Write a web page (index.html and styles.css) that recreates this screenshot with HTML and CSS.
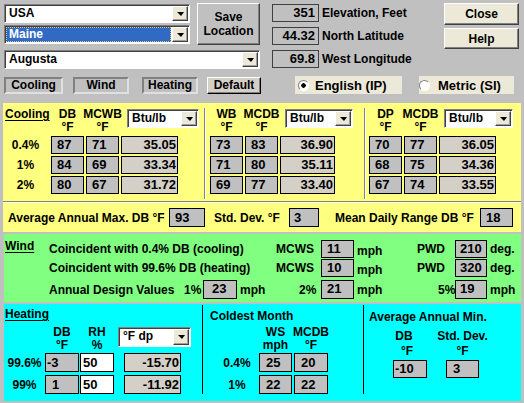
FILE: index.html
```html
<!DOCTYPE html>
<html lang="en">
<head>
    <meta charset="UTF-8" />
    <title>Design Conditions</title>
    <link rel="stylesheet" href="styles.css">
</head>
<body>
<div class="form">
    <div class="top">
        <div class="loc">
            <div class="loc-row">
                <div class="pick-stack">
                    <div class="combo"><span class="combo-text">USA</span><span class="drop"></span></div>
                    <div class="combo"><span class="combo-text combo-sel">Maine</span><span class="drop"></span></div>
                </div>
                <div class="btn btn-save">Save<br>Location</div>
            </div>
            <div class="combo combo-city"><span class="combo-text">Augusta</span><span class="drop"></span></div>
            <div class="tabs">
                <span class="tab tab-down">Cooling</span>
                <span class="tab tab-down tab-wind">Wind</span>
                <span class="tab tab-down tab-heat">Heating</span>
                <span class="tab tab-default">Default</span>
            </div>
        </div>
        <div class="site">
            <div class="site-row">
                <div class="facts">
                    <div class="fact"><span class="fact-val">351</span>Elevation, Feet</div>
                    <div class="fact"><span class="fact-val">44.32</span>North Latitude</div>
                    <div class="fact"><span class="fact-val">69.8</span>West Longitude</div>
                </div>
                <div class="cmds">
                    <div class="btn btn-cmd">Close</div>
                    <div class="btn btn-cmd btn-help">Help</div>
                </div>
            </div>
            <div class="units">
                <span class="radio radio-on"><span class="dot"></span>English (IP)</span>
                <span class="radio radio-si"><span class="dot"></span>Metric (SI)</span>
            </div>
        </div>
    </div>

    <!-- cooling -->
    <section class="panel cooling">
        <div class="cool-groups">
            <div class="grp grp-1">
                <div class="grp-head">
                    <span class="lead"><span class="title">Cooling</span></span>
                    <span class="col-head">DB<br>°F</span>
                    <span class="col-head">MCWB<br>°F</span>
                    <div class="combo combo-unit"><span class="combo-text">Btu/lb</span><span class="drop"></span></div>
                </div>
                <div class="grp-row"><span class="lead">0.4%</span><span class="box">87</span><span class="box">71</span><span class="box box-enth">35.05</span></div>
                <div class="grp-row"><span class="lead">1%</span><span class="box">84</span><span class="box">69</span><span class="box box-enth">33.34</span></div>
                <div class="grp-row"><span class="lead">2%</span><span class="box">80</span><span class="box">67</span><span class="box box-enth">31.72</span></div>
            </div>
            <div class="grp grp-2">
                <div class="grp-head">
                    <span class="lead"></span>
                    <span class="col-head">WB<br>°F</span>
                    <span class="col-head">MCDB<br>°F</span>
                    <div class="combo combo-unit"><span class="combo-text">Btu/lb</span><span class="drop"></span></div>
                </div>
                <div class="grp-row"><span class="lead"></span><span class="box">73</span><span class="box">83</span><span class="box box-enth">36.90</span></div>
                <div class="grp-row"><span class="lead"></span><span class="box">71</span><span class="box">80</span><span class="box box-enth">35.11</span></div>
                <div class="grp-row"><span class="lead"></span><span class="box">69</span><span class="box">77</span><span class="box box-enth">33.40</span></div>
            </div>
            <div class="grp grp-3">
                <div class="grp-head">
                    <span class="lead"></span>
                    <span class="col-head">DP<br>°F</span>
                    <span class="col-head">MCDB<br>°F</span>
                    <div class="combo combo-unit"><span class="combo-text">Btu/lb</span><span class="drop"></span></div>
                </div>
                <div class="grp-row"><span class="lead"></span><span class="box">70</span><span class="box">77</span><span class="box box-enth">36.05</span></div>
                <div class="grp-row"><span class="lead"></span><span class="box">68</span><span class="box">75</span><span class="box box-enth">34.36</span></div>
                <div class="grp-row"><span class="lead"></span><span class="box">67</span><span class="box">74</span><span class="box box-enth">33.55</span></div>
            </div>
        </div>
        <div class="cool-rule"></div>
        <div class="cool-foot">
            <span class="foot-lbl foot-max">Average Annual Max. DB °F</span>
            <span class="box box-max">93</span>
            <span class="foot-lbl foot-sd">Std. Dev. °F</span>
            <span class="box box-sd">3</span>
            <span class="foot-lbl foot-range">Mean Daily Range DB °F</span>
            <span class="box box-range">18</span>
        </div>
    </section>

    <!-- wind -->
    <section class="panel wind">
        <div class="wind-side"><span class="title">Wind</span></div>
        <div class="wind-body">
            <div class="wind-row">
                <span class="w-desc">Coincident with 0.4% DB (cooling)</span>
                <span class="w-key">MCWS</span>
                <span class="box box-w">11</span>
                <span class="w-unit w-low w-gap">mph</span>
                <span class="w-key w-key-pwd">PWD</span>
                <span class="box box-pwd">210</span>
                <span class="w-unit">deg.</span>
            </div>
            <div class="wind-row">
                <span class="w-desc">Coincident with 99.6% DB (heating)</span>
                <span class="w-key">MCWS</span>
                <span class="box box-w">10</span>
                <span class="w-unit w-low w-gap">mph</span>
                <span class="w-key w-key-pwd">PWD</span>
                <span class="box box-pwd">320</span>
                <span class="w-unit">deg.</span>
            </div>
            <div class="wind-row wind-annual">
                <span class="w-annual">Annual Design Values</span>
                <span class="w-pct w-pct-1">1%</span>
                <span class="box box-w box-w1">23</span>
                <span class="w-unit w-gap-1">mph</span>
                <span class="w-pct w-pct-2">2%</span>
                <span class="box box-w">21</span>
                <span class="w-unit w-gap-2">mph</span>
                <span class="w-pct w-pct-5">5%</span>
                <span class="box box-pwd">19</span>
                <span class="w-unit">mph</span>
            </div>
        </div>
    </section>

    <!-- heating -->
    <section class="panel heating">
        <div class="hgrp hgrp-heat">
            <span class="title">Heating</span>
            <div class="heat-head">
                <span class="heat-lead"></span>
                <span class="heat-col">DB<br>°F</span>
                <span class="heat-col">RH<br>%</span>
                <div class="combo combo-dp"><span class="combo-text">°F dp</span><span class="drop"></span></div>
            </div>
            <div class="heat-row"><span class="heat-lead">99.6%</span><span class="box box-h">-3</span><span class="box box-h box-white">50</span><span class="box box-enth box-hres">-15.70</span></div>
            <div class="heat-row"><span class="heat-lead">99%</span><span class="box box-h box-c">1</span><span class="box box-h box-white">50</span><span class="box box-enth box-hres">-11.92</span></div>
        </div>
        <div class="hgrp hgrp-cold">
            <span class="sub-title">Coldest Month</span>
            <div class="cold-head">
                <span class="cold-lead"></span>
                <span class="cold-col">WS<br>mph</span>
                <span class="cold-col cold-col-b">MCDB<br>°F</span>
            </div>
            <div class="heat-row"><span class="cold-lead">0.4%</span><span class="box box-cold">25</span><span class="box box-cold cold-col-b">20</span></div>
            <div class="heat-row"><span class="cold-lead">1%</span><span class="box box-cold">22</span><span class="box box-cold cold-col-b">22</span></div>
        </div>
        <div class="hgrp hgrp-min">
            <span class="sub-title">Average Annual Min.</span>
            <div class="min-cols">
                <div class="min-col">
                    <span class="min-head min-db">DB</span>
                    <span class="min-head min-deg">°F</span>
                    <span class="box box-min">-10</span>
                </div>
                <div class="min-col min-col-sd">
                    <span class="min-head">Std. Dev.</span>
                    <span class="min-head">°F</span>
                    <span class="box box-min box-min-sd">3</span>
                </div>
            </div>
        </div>
    </section>
</div>
</body>
</html>
```

FILE: styles.css
```css
body {
    margin: 0;
    background: #c0c0c0;
    font-family: "Liberation Sans", Arial, sans-serif;
    font-size: 12px;
    font-weight: bold;
    color: #000;
}

.form {
    width: 524px;
    height: 403px;
    overflow: hidden;
}

/* ---------- shared controls ---------- */

.combo {
    box-sizing: border-box;
    display: flex;
    height: 19px;
    padding: 1px;
    background: #fff;
    border: 1px solid;
    border-color: #808080 #fff #fff #808080;
    box-shadow: inset 1px 1px #404040;
}

.combo-text {
    flex: 1;
    padding-left: 3px;
    line-height: 15px;
    white-space: nowrap;
    overflow: hidden;
}

.combo-sel {
    box-sizing: border-box;
    margin-right: 1px;
    padding-left: 2px;
    line-height: 13px;
    background: #316ac5;
    color: #fff;
    border: 1px dotted #e8c070;
}

.drop {
    box-sizing: border-box;
    width: 16px;
    display: flex;
    align-items: center;
    justify-content: center;
    background: #ece9d8;
    border: 1px solid;
    border-color: #fff #404040 #404040 #fff;
    box-shadow: inset -1px -1px #a0a0a0;
}

.drop::after {
    content: "";
    border-top: 4px solid #000;
    border-left: 4px solid transparent;
    border-right: 3px solid transparent;
}

.btn {
    box-sizing: border-box;
    display: flex;
    align-items: center;
    justify-content: center;
    text-align: center;
    border: 1px solid;
    border-color: #fff #404040 #404040 #fff;
    box-shadow: inset -1px -1px #808080;
}

.box {
    box-sizing: border-box;
    display: block;
    flex: none;
    width: 33px;
    height: 18px;
    padding-left: 5px;
    background: #c0c0c0;
    border: 1px solid #000;
    font-size: 13px;
    line-height: 16px;
    white-space: nowrap;
}

.box-enth {
    padding: 0 1px 0 0;
    background: #d4d0c8;
    text-align: right;
}

.title {
    text-decoration: underline;
    text-underline-offset: 2px;
    line-height: 12px;
}

/* ---------- top area ---------- */

.top {
    display: flex;
    height: 103px;
}

.loc {
    width: 257px;
    margin-left: 4px;
    padding-top: 3px;
}

.loc-row {
    display: flex;
}

.pick-stack {
    display: flex;
    flex-direction: column;
    gap: 2px;
    width: 186px;
    margin-top: 1px;
}

.btn-save {
    width: 63px;
    height: 42px;
    margin-left: 7px;
    line-height: 14px;
    background: #c0c0c0;
}

.combo-city {
    width: 256px;
    margin-top: 5px;
}

.tabs {
    display: flex;
    margin-top: 8px;
}

.tab {
    box-sizing: border-box;
    width: 59px;
    height: 17px;
    line-height: 13px;
    text-align: center;
    background: #c0c0c0;
    border: 2px solid;
    border-color: #808080 #e0e0e0 #e0e0e0 #808080;
}

.tab-wind {
    width: 56px;
    margin-left: 10px;
}

.tab-heat {
    width: 56px;
    margin-left: 13px;
}

.tab-default {
    width: 54px;
    margin-left: 9px;
    line-height: 14px;
    background: #d4d0c8;
    border: 1px solid;
    border-color: #fff #000 #000 #fff;
    box-shadow: inset -1px -1px #808080;
}

.site {
    margin-left: 11px;
    padding-top: 3px;
}

.site-row {
    display: flex;
    height: 73px;
}

.facts {
    width: 172px;
    margin-top: 1px;
    display: flex;
    flex-direction: column;
    gap: 5px;
}

.fact {
    display: flex;
    align-items: center;
    height: 18px;
    white-space: nowrap;
}

.fact-val {
    box-sizing: border-box;
    width: 47px;
    height: 18px;
    margin-right: 3px;
    padding-right: 3px;
    text-align: right;
    font-size: 13px;
    line-height: 16px;
    border: 1px solid #404040;
}

.cmds {
    display: flex;
    flex-direction: column;
}

.btn-cmd {
    width: 75px;
    height: 22px;
    background: #ece9d8;
}

.btn-help {
    height: 21px;
    margin-top: 3px;
}

.units {
    display: flex;
    margin-left: 23px;
}

.radio {
    display: flex;
    align-items: center;
    width: 107px;
    height: 18px;
    background: #ece9d8;
    font-size: 13px;
    white-space: nowrap;
}

.radio-si {
    width: 95px;
    margin-left: 17px;
}

.dot {
    box-sizing: border-box;
    width: 11px;
    height: 11px;
    margin: 0 6px 0 3px;
    border-radius: 50%;
    background: #fff;
    border: 1px solid;
    border-color: #808080 #fff #fff #808080;
}

.radio-on .dot {
    background: radial-gradient(circle, #000 0 2px, #fff 2.5px);
}

.radio-si .dot {
    margin-left: 0;
    margin-right: 8px;
}

/* ---------- panels ---------- */

.panel {
    margin-left: 4px;
    width: 517px;
}

.cooling {
    margin-left: 3px;
    width: 518px;
    padding: 5px 0 5px;
    background: #ffff80;
}

.cool-groups {
    display: flex;
}

.grp {
    padding-bottom: 3px;
}

.grp-1 {
    width: 201px;
}

.grp-2,
.grp-3 {
    border-left: 1px solid #808080;
    box-shadow: inset 1px 0 #fff;
}

.grp-2 {
    width: 159px;
}

.grp-3 {
    flex: 1;
}

.grp-head,
.grp-row {
    display: flex;
    align-items: flex-start;
}

.grp-head {
    height: 26px;
    margin-bottom: 2px;
}

.grp-row {
    align-items: center;
    margin-bottom: 2px;
}

.lead {
    flex: none;
    width: 48px;
    text-align: center;
    padding-right: 3px;
    box-sizing: border-box;
}

.grp-1 .lead .title {
    display: block;
    text-align: left;
    padding-left: 2px;
}

.grp-2 .lead {
    width: 5px;
}

.grp-3 .lead {
    width: 4px;
}

.col-head {
    width: 33px;
    line-height: 13px;
    text-align: center;
    white-space: nowrap;
    display: flex;
    flex-direction: column;
    align-items: center;
}

.grp-head .col-head + .col-head,
.grp-row .box + .box {
    margin-left: 2px;
}

.combo-unit {
    width: 72px;
    margin: 1px 0 0 8px;
}

.grp-row .box-enth {
    width: 57px;
    margin-left: 21px;
}

.grp-2 .combo-unit {
    width: 68px;
    margin-left: 7px;
}

.grp-2 .box-enth {
    width: 55px;
    margin-left: 15px;
}

.grp-3 .combo-unit {
    width: 69px;
    margin-left: 7px;
}

.grp-3 .box-enth {
    margin-left: 15px;
}

.cool-rule {
    margin-top: 2px;
    border-top: 1px solid #808080;
    border-bottom: 1px solid #fff;
}

.cool-foot {
    display: flex;
    align-items: center;
    margin-top: 5px;
    padding-left: 5px;
    white-space: nowrap;
}

.cool-foot .box {
    height: 19px;
    line-height: 17px;
}

.foot-max {
    width: 161px;
}

.box-max {
    width: 36px;
}

.foot-sd {
    width: 75px;
    margin-left: 9px;
}

.box-sd {
    width: 30px;
    padding-left: 4px;
}

.foot-range {
    width: 145px;
    margin-left: 16px;
}

/* wind */

.wind {
    display: flex;
    margin-top: 2px;
    padding: 5px 0 3px;
    background: #80ff80;
}

.wind-side {
    width: 44px;
    padding-left: 1px;
}

.wind-row {
    display: flex;
    align-items: center;
    height: 19px;
    white-space: nowrap;
}

.wind-row .box {
    height: 18px;
}

.w-desc {
    width: 227px;
}

.w-key {
    width: 45px;
}

.w-key-pwd {
    width: 38px;
}

.box-pwd {
    width: 32px;
    padding-left: 4px;
}

.w-unit {
    padding-left: 3px;
}

.w-low {
    align-self: flex-end;
    line-height: 14px;
}

.w-gap {
    width: 60px;
}

.wind-annual {
    margin-top: 3px;
}

.wind-annual .box {
    height: 19px;
}

.w-annual {
    width: 135px;
}

.w-pct-1 {
    width: 19px;
}

.box-w1 {
    width: 34px;
    padding-left: 8px;
}

.w-gap-1 {
    width: 59px;
}

.w-pct-2 {
    width: 22px;
}

.w-gap-2 {
    width: 81px;
}

.w-pct-5 {
    width: 17px;
}

/* heating */

.heating {
    display: flex;
    margin-top: 2px;
    padding: 1px 0 7px;
    background: #00ffff;
}

.hgrp {
    display: flex;
    flex-direction: column;
}

.hgrp-heat {
    width: 198px;
}

.hgrp-heat .title {
    margin-top: 3px;
    padding-left: 1px;
}

.hgrp-cold,
.hgrp-min {
    border-left: 1px solid #000;
}

.hgrp-cold {
    width: 160px;
}

.hgrp-min {
    flex: 1;
}

.heat-head {
    display: flex;
    margin-top: 6px;
    height: 26px;
}

.heat-lead {
    width: 41px;
    text-align: center;
}

.heat-col {
    width: 34px;
    line-height: 13px;
    text-align: center;
}

.heat-col + .heat-col {
    margin-left: 1px;
}

.combo-dp {
    width: 73px;
    height: 20px;
    margin: 1px 0 0 4px;
}

.heat-row {
    display: flex;
    align-items: center;
    margin-top: 1px;
}

.heat-row + .heat-row {
    margin-top: 3px;
}

.box-h {
    width: 34px;
    height: 19px;
    line-height: 17px;
    padding-left: 1px;
}

.box-c {
    padding-left: 6px;
}

.box-white {
    margin-left: 1px;
    padding-left: 2px;
    background: #fff;
}

.box-hres {
    width: 57px;
    height: 19px;
    line-height: 17px;
    margin-left: 10px;
}

.sub-title {
    margin-top: 5px;
    padding-left: 7px;
    line-height: 12px;
}

.cold-head {
    display: flex;
    margin-top: 4px;
}

.cold-lead {
    box-sizing: border-box;
    width: 56px;
    padding-left: 12px;
    text-align: center;
}

.cold-col {
    width: 33px;
    line-height: 13px;
    text-align: center;
    display: flex;
    flex-direction: column;
    align-items: center;
}

.cold-col-b {
    width: 34px;
    margin-left: 2px;
}

.box-cold {
    height: 19px;
    line-height: 17px;
    padding-left: 6px;
}

.hgrp-min .sub-title {
    margin-top: 6px;
    padding-left: 5px;
}

.min-cols {
    display: flex;
    margin: 6px 0 0 29px;
}

.min-col {
    width: 34px;
    display: flex;
    flex-direction: column;
    align-items: center;
}

.min-col-sd {
    width: 33px;
    margin-left: 19px;
}

.min-head {
    line-height: 15px;
    white-space: nowrap;
}

.min-db {
    margin-right: 12px;
}

.min-deg {
    margin-right: 6px;
}

.box-min {
    width: 34px;
    margin-top: 1px;
    padding-left: 1px;
}

.box-min-sd {
    width: 33px;
    padding-left: 6px;
}
```
